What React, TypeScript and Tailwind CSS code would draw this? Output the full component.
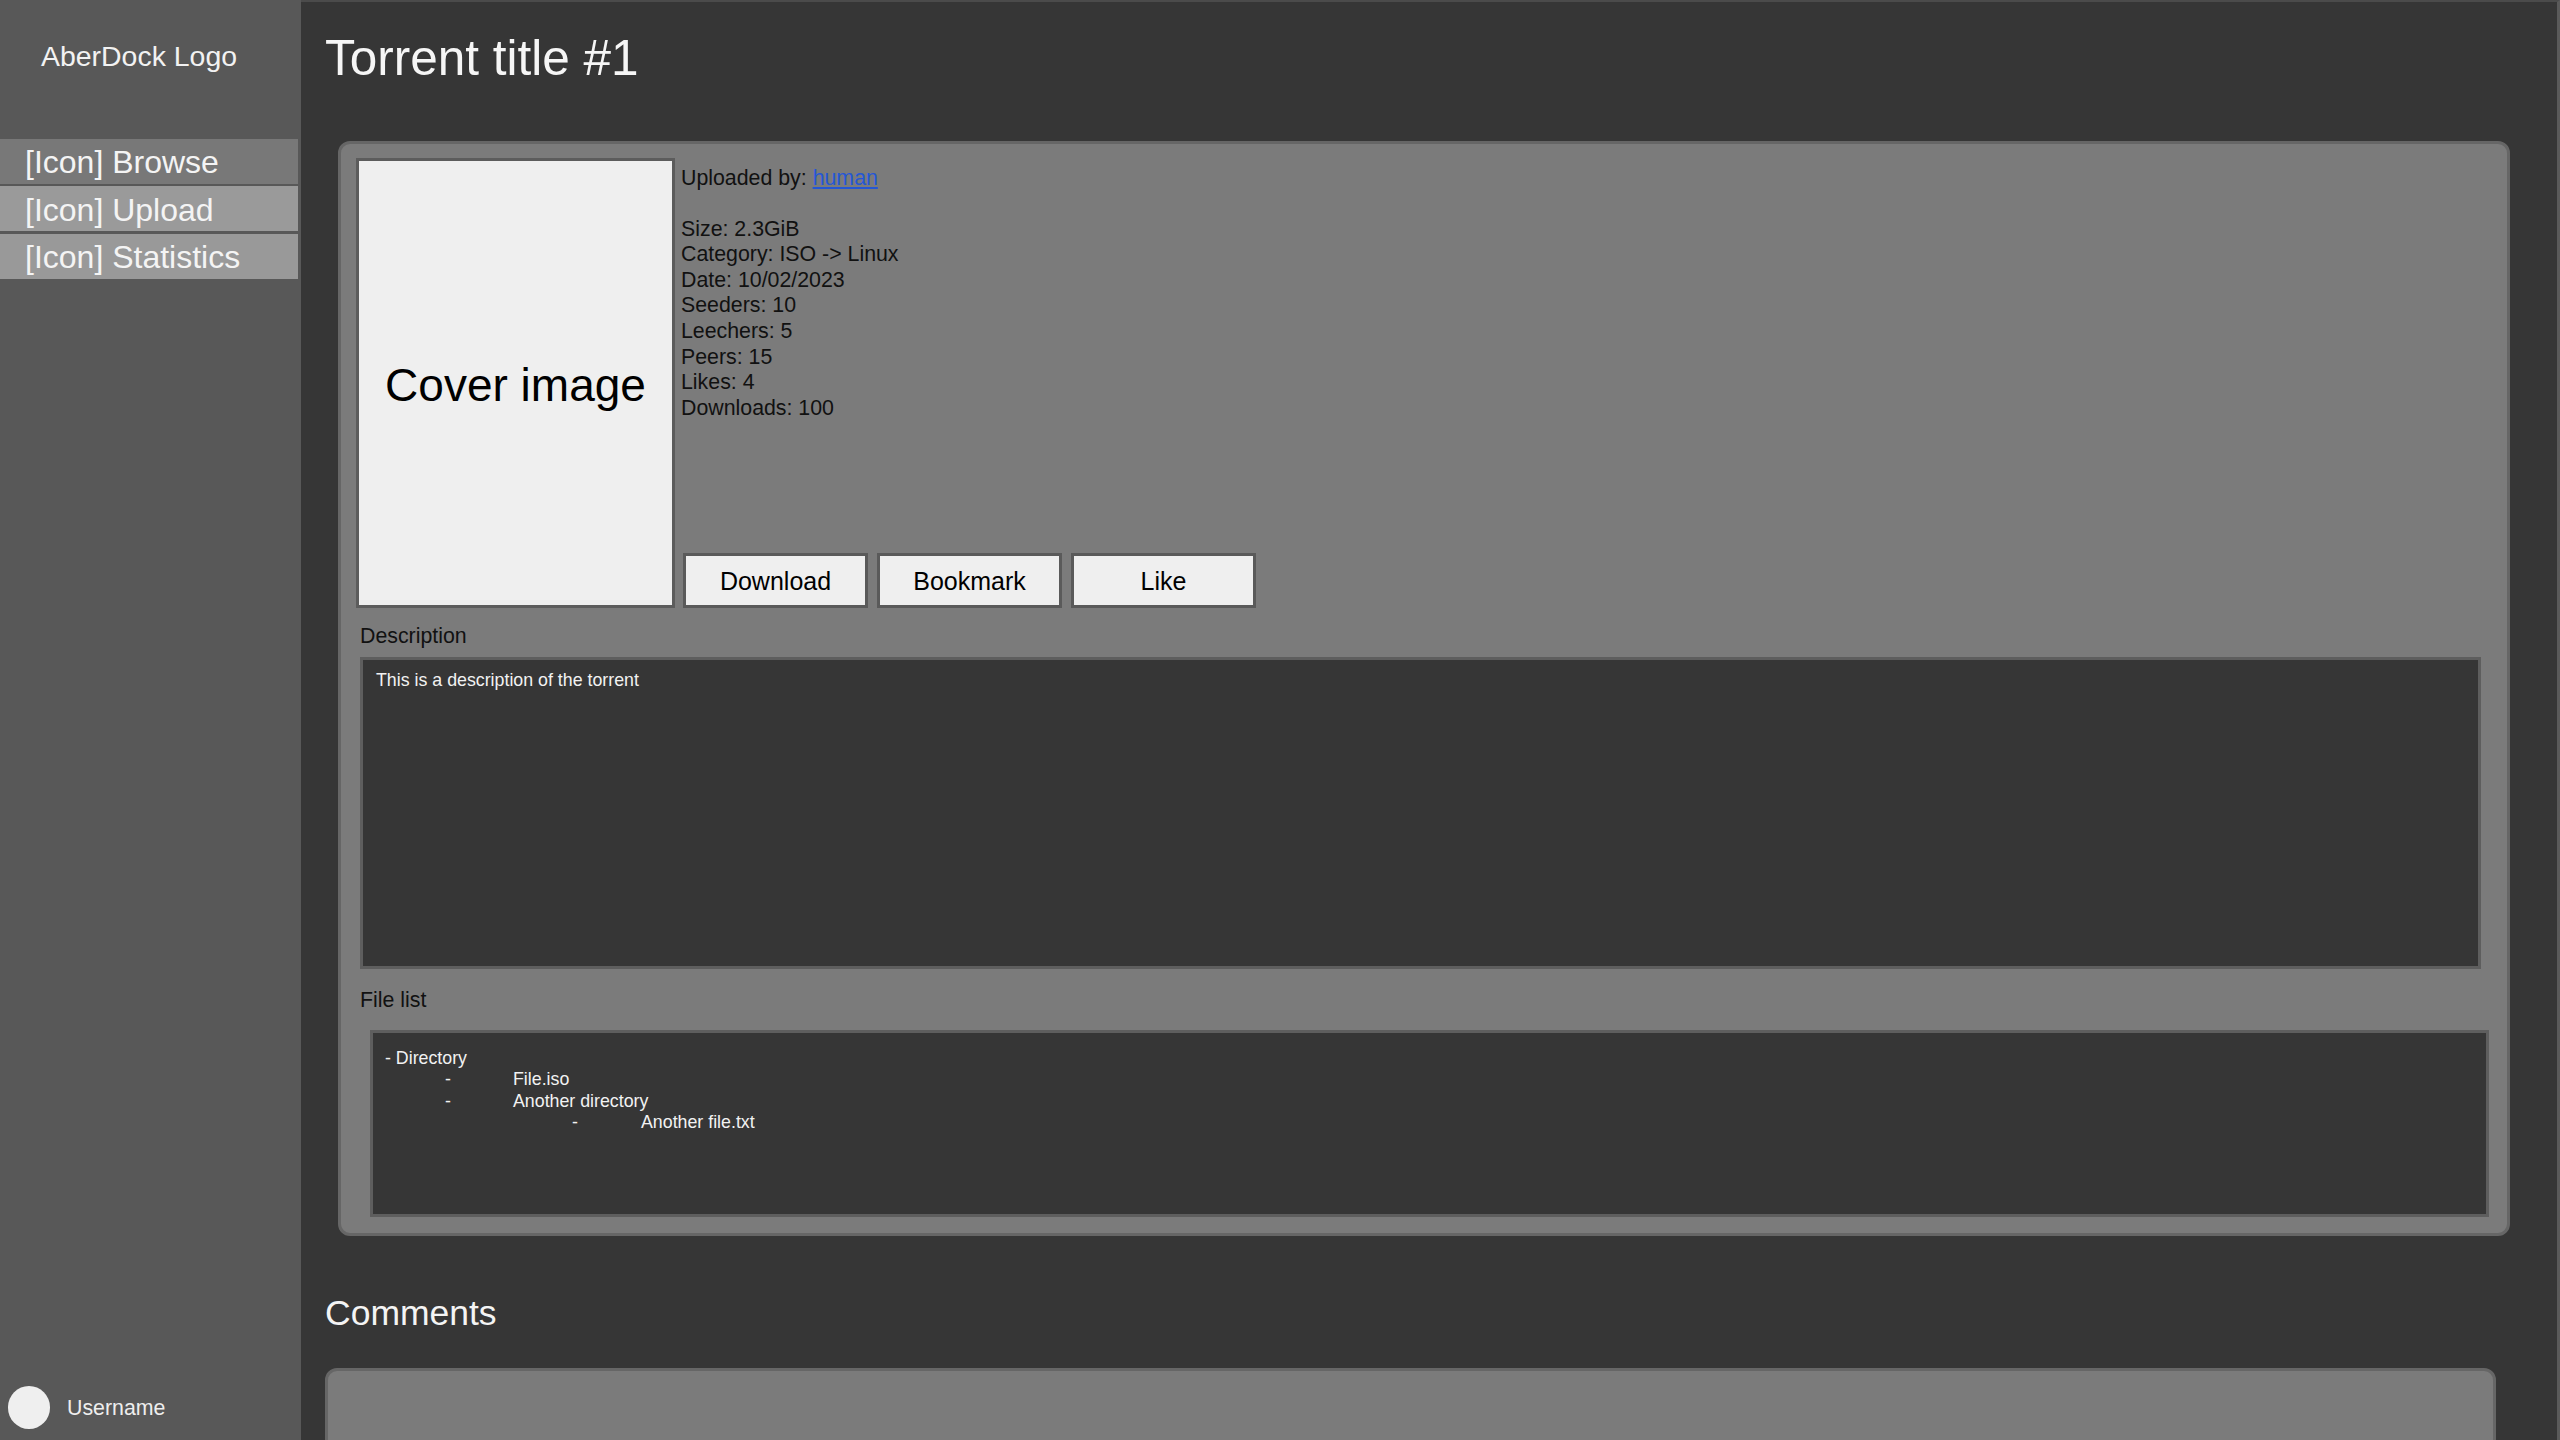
import React from "react";

const navItems = [
  { label: "[Icon] Browse", bg: "bg-[#787878]" },
  { label: "[Icon] Upload", bg: "bg-[#9a9a9a]" },
  { label: "[Icon] Statistics", bg: "bg-[#999999]" },
];

const stats = [
  "Size: 2.3GiB",
  "Category: ISO -> Linux",
  "Date: 10/02/2023",
  "Seeders: 10",
  "Leechers: 5",
  "Peers: 15",
  "Likes: 4",
  "Downloads: 100",
];

const Sidebar = () => (
  <aside className="flex h-full w-[301px] shrink-0 flex-col bg-[#585858]">
    {/* Logo */}
    <div className="pl-[41px] pt-[40px] text-[28.44px] leading-[32.7px] text-[#f2f2f2]">
      AberDock Logo
    </div>

    {/* Nav */}
    <nav className="mt-[66px] flex flex-col gap-[2.5px]">
      {navItems.map((item) => (
        <div
          key={item.label}
          className={`flex h-[45px] w-[298px] items-center px-[25px] pt-[3px] text-[32px] leading-[37px] text-[#f4f4f4] ${item.bg}`}
        >
          {item.label}
        </div>
      ))}
    </nav>

    <div className="flex-1" />

    {/* User */}
    <div className="flex items-center pb-[11px] pl-[8px]">
      <div className="h-[43px] w-[42px] rounded-full bg-[#efefef]" />
      <span className="ml-[17px] pt-[2px] text-[21.33px] leading-[25.6px] text-[#eeeeee]">Username</span>
    </div>
  </aside>
);

const Button = ({ children }: { children: React.ReactNode }) => (
  <button className="flex h-[55px] w-[185px] items-center justify-center border-[3px] border-[#5a5a5a] bg-[#efefef] pt-[2px] text-[25px] leading-[29px] text-black">
    {children}
  </button>
);

const TorrentCard = () => (
  <div className="ml-[37px] mr-[47px] mt-[55px] rounded-[12px] border-[3px] border-[#666666] bg-[#7b7b7b] px-[15px] pb-[16px] pt-[14px] text-[#111111]">
    {/* Top row */}
    <div className="flex">
      <div className="flex h-[450px] w-[319px] shrink-0 items-center justify-center border-[3px] border-[#5c5c5c] bg-[#efefef] pt-[6px]">
        <span className="text-[46px] leading-[53px] text-black">Cover image</span>
      </div>

      <div className="ml-[6px] flex flex-1 flex-col justify-between pt-[8px]">
        <div className="text-[21.33px] leading-[25.6px]">
          <p>
            Uploaded by:{" "}
            <a href="#" className="text-[#2457d6] underline">
              human
            </a>
          </p>
          <br />
          {stats.map((s) => (
            <p key={s}>{s}</p>
          ))}
        </div>
        <div className="ml-[2px] flex gap-[9px]">
          <Button>Download</Button>
          <Button>Bookmark</Button>
          <Button>Like</Button>
        </div>
      </div>
    </div>

    {/* Description */}
    <div className="ml-[4px] mr-[11px] mt-[16.5px]">
      <p className="text-[21.33px] leading-[25.6px]">Description</p>
      <div className="mt-[7.5px] h-[312px] border-[3px] border-[#5e5e5e] bg-[#363636] px-[13px] pt-[9.5px] text-[17.8px] leading-[21.3px] text-[#f2f2f2]">
        This is a description of the torrent
      </div>
    </div>

    {/* File list */}
    <div className="mr-[3px] mt-[18.5px]">
      <p className="ml-[4px] text-[21.33px] leading-[25.6px]">File list</p>
      <div className="ml-[14px] mt-[16.5px] h-[187px] border-[3px] border-[#5e5e5e] bg-[#363636] pl-[12px] pt-[15.5px] text-[17.8px] leading-[21.3px] text-[#f2f2f2]">
        <p>- Directory</p>
        <div className="flex pl-[60px]">
          <span className="w-[68px]">-</span>
          <span>File.iso</span>
        </div>
        <div className="flex pl-[60px]">
          <span className="w-[68px]">-</span>
          <span>Another directory</span>
        </div>
        <div className="flex pl-[187px]">
          <span className="w-[69px]">-</span>
          <span>Another file.txt</span>
        </div>
      </div>
    </div>
  </div>
);

export default function App() {
  return (
    <div className="flex h-screen w-full overflow-hidden bg-[#363636] font-['Liberation_Sans',Arial,sans-serif]">
      <Sidebar />

      <main className="h-full flex-1 overflow-hidden border-r-[3px] border-t-2 border-r-[#5a5a5a] border-t-[#4b4b4b] bg-[#363636]">
        <h1 className="ml-[24px] mt-[27.5px] text-[49.5px] leading-[56px] text-[#f6f6f6]">
          Torrent title #1
        </h1>

        <TorrentCard />

        <h2 className="ml-[24px] mt-[57px] text-[35.5px] leading-[41px] text-[#f4f4f4]">Comments</h2>

        <div className="ml-[24px] mr-[61px] mt-[34px] h-[200px] rounded-[12px] border-[3px] border-[#666666] bg-[#7b7b7b]" />
      </main>
    </div>
  );
}
